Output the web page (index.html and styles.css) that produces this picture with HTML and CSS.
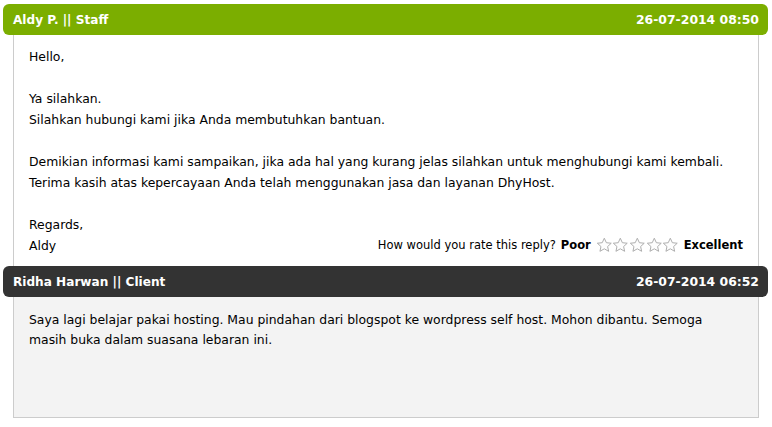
FILE: index.html
```html
<!DOCTYPE html>
<html lang="en">
<head>
  <meta charset="UTF-8">
  <title>Ticket Replies</title>
  <link rel="stylesheet" href="styles.css">
</head>
<body>
  <div class="thread">
    <div class="reply staff">
      <div class="reply-head">
        <span class="author">Aldy P. || Staff</span>
        <span class="date">26-07-2014 08:50</span>
      </div>
      <div class="reply-body">
        <p>Hello,</p>
        <p>Ya silahkan.<br>Silahkan hubungi kami jika Anda membutuhkan bantuan.</p>
        <p>Demikian informasi kami sampaikan, jika ada hal yang kurang jelas silahkan untuk menghubungi kami kembali.<br>Terima kasih atas kepercayaan Anda telah menggunakan jasa dan layanan DhyHost.</p>
        <div class="sign">
          <p>Regards,<br>Aldy</p>
          <div class="rating">
            How would you rate this reply? <b>Poor</b>
            <span class="stars">
              <svg viewBox="0 0 16 16"><path d="M8 1.2l2 4.3 4.7.5-3.5 3.2 1 4.6L8 11.4l-4.2 2.4 1-4.6L1.3 6l4.7-.5z"/></svg>
              <svg viewBox="0 0 16 16"><path d="M8 1.2l2 4.3 4.7.5-3.5 3.2 1 4.6L8 11.4l-4.2 2.4 1-4.6L1.3 6l4.7-.5z"/></svg>
              <svg viewBox="0 0 16 16"><path d="M8 1.2l2 4.3 4.7.5-3.5 3.2 1 4.6L8 11.4l-4.2 2.4 1-4.6L1.3 6l4.7-.5z"/></svg>
              <svg viewBox="0 0 16 16"><path d="M8 1.2l2 4.3 4.7.5-3.5 3.2 1 4.6L8 11.4l-4.2 2.4 1-4.6L1.3 6l4.7-.5z"/></svg>
              <svg viewBox="0 0 16 16"><path d="M8 1.2l2 4.3 4.7.5-3.5 3.2 1 4.6L8 11.4l-4.2 2.4 1-4.6L1.3 6l4.7-.5z"/></svg>
            </span>
            <b>Excellent</b>
          </div>
        </div>
      </div>
    </div>

    <div class="reply client">
      <div class="reply-head">
        <span class="author">Ridha Harwan || Client</span>
        <span class="date">26-07-2014 06:52</span>
      </div>
      <div class="reply-body">
        <p>Saya lagi belajar pakai hosting. Mau pindahan dari blogspot ke wordpress self host. Mohon dibantu. Semoga masih buka dalam suasana lebaran ini.</p>
      </div>
    </div>
  </div>
</body>
</html>
```

FILE: styles.css
```css
body {
  margin: 0;
  background: #fff;
  font-family: "DejaVu Sans", Verdana, sans-serif;
  font-size: 12.4px;
  color: #000;
}

.thread {
  padding: 4px 4px 0 3px;
}

.reply-head {
  display: flex;
  justify-content: space-between;
  align-items: center;
  height: 31px;
  padding: 0 9px 0 10px;
  border-radius: 6px;
  color: #fff;
  font-weight: bold;
  font-size: 12.4px;
}

.author {
  font-size: 12.1px;
}

.staff .reply-head {
  background: #7bae00;
}

.client .reply-head {
  background: #333333;
}

.reply-body {
  margin: 0 9px 0 10px;
  padding: 11px 15px 10px;
  border: 1px solid #cccccc;
  border-top: none;
  border-bottom: none;
  line-height: 21px;
}

.client .reply-body {
  box-sizing: border-box;
  min-height: 121px;
  background: #f3f3f3;
  border-bottom: 1px solid #cccccc;
  padding-top: 13px;
  line-height: 20px;
}

.reply-body p {
  margin: 0 0 21px;
}

.sign {
  display: flex;
  justify-content: space-between;
  align-items: flex-end;
}

.sign p {
  margin: 0;
}

.rating {
  font-size: 11.5px;
  display: flex;
  align-items: center;
  gap: 5px;
  line-height: 21px;
}

.stars {
  display: flex;
}

.stars svg {
  width: 16.6px;
  height: 16.6px;
  fill: #fdfdfd;
  stroke: #a8a8a8;
  stroke-width: 0.9;
}
```
